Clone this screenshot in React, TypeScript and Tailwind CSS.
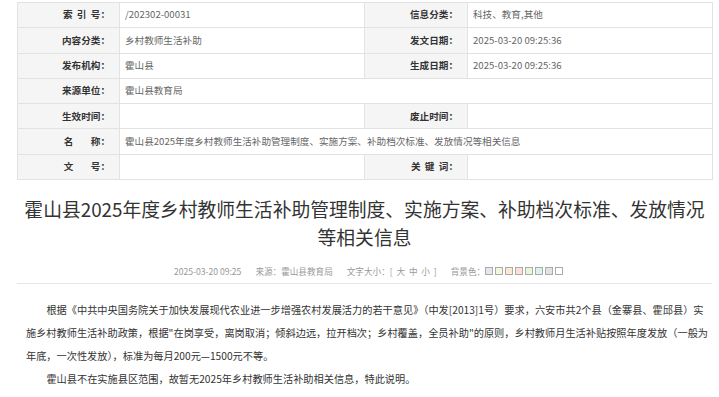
import React from 'react';

const font = { fontFamily: '"Microsoft YaHei", "Noto Sans CJK SC", sans-serif' };

const Label: React.FC<{ children: React.ReactNode }> = ({ children }) => (
  <td className="bg-[#f5f5f5] border border-[#e2e2e2] text-right pr-[9px] font-bold text-[#333] whitespace-pre">
    {children}
  </td>
);

const Value: React.FC<{ children?: React.ReactNode; span?: number }> = ({ children, span }) => (
  <td colSpan={span} className="bg-white border border-[#e2e2e2] pl-[5px] text-[#666]">
    {children}
  </td>
);

const swatches = ['#e6e6f0', '#f2f6dc', '#fbe8d5', '#fbdfd8', '#e9f6d6', '#d6f3ec', '#e2e2ea', '#ffffff'];

export default function App() {
  return (
    <div className="bg-white min-h-screen pl-[17px] pr-[7px] pt-[2px]" style={font}>
      <table className="w-[695px] border-collapse text-[9.6px] leading-none table-fixed">
        <colgroup>
          <col className="w-[102px]" />
          <col className="w-[245px]" />
          <col className="w-[103px]" />
          <col className="w-[245px]" />
        </colgroup>
        <tbody>
          <tr className="h-[25.3px]">
            <Label>{'索  引  号：'}</Label>
            <Value>/202302-00031</Value>
            <Label>信息分类：</Label>
            <Value>科技、教育,其他</Value>
          </tr>
          <tr className="h-[25.3px]">
            <Label>内容分类：</Label>
            <Value>乡村教师生活补助</Value>
            <Label>发文日期：</Label>
            <Value>2025-03-20 09:25:36</Value>
          </tr>
          <tr className="h-[25.3px]">
            <Label>发布机构：</Label>
            <Value>霍山县</Value>
            <Label>生成日期：</Label>
            <Value>2025-03-20 09:25:36</Value>
          </tr>
          <tr className="h-[25.3px]">
            <Label>来源单位：</Label>
            <Value span={3}>霍山县教育局</Value>
          </tr>
          <tr className="h-[25.3px]">
            <Label>生效时间：</Label>
            <Value />
            <Label>废止时间：</Label>
            <Value />
          </tr>
          <tr className="h-[25.3px]">
            <Label>{'名        称：'}</Label>
            <Value span={3}>霍山县2025年度乡村教师生活补助管理制度、实施方案、补助档次标准、发放情况等相关信息</Value>
          </tr>
          <tr className="h-[25.3px]">
            <Label>{'文        号：'}</Label>
            <Value />
            <Label>{'关  键  词：'}</Label>
            <Value />
          </tr>
        </tbody>
      </table>

      <div className="w-[695px]">
        <h1 className="mt-[15px] px-[4px] text-center text-[18.8px] leading-[28px] text-[#333] font-normal">
          霍山县2025年度乡村教师生活补助管理制度、实施方案、补助档次标准、发放情况等相关信息
        </h1>

        <div className="mt-[13px] pb-[5px] border-b border-[#e6e6e6] flex justify-center items-center text-[8.6px] leading-[14px] text-[#999] pl-[8px]">
          <span>2025-03-20 09:25</span>
          <span className="ml-[14px]">来源：霍山县教育局</span>
          <span className="ml-[14px] whitespace-pre">{'文字大小：[  大  中  小  ]'}</span>
          <span className="ml-[14px]">背景色：</span>
          <span className="flex gap-[2px]">
            {swatches.map((c) => (
              <span key={c} className="block w-[8px] h-[8px] border border-[#aaa]" style={{ backgroundColor: c }} />
            ))}
          </span>
        </div>

        <div className="pt-[14px] pl-[9px] text-[10.2px] leading-[23px] text-[#333]">
          <p className="indent-[2em]">
            根据《中共中央国务院关于加快发展现代农业进一步增强农村发展活力的若干意见》（中发[2013]1号）要求，六安市共2个县（金寨县、霍邱县）实施乡村教师生活补助政策，根据"在岗享受，离岗取消；倾斜边远，拉开档次；乡村覆盖，全员补助"的原则，乡村教师月生活补贴按照年度发放（一般为年底，一次性发放），标准为每月200元—1500元不等。
          </p>
          <p className="indent-[2em]">霍山县不在实施县区范围，故暂无2025年乡村教师生活补助相关信息，特此说明。</p>
        </div>
      </div>
    </div>
  );
}
